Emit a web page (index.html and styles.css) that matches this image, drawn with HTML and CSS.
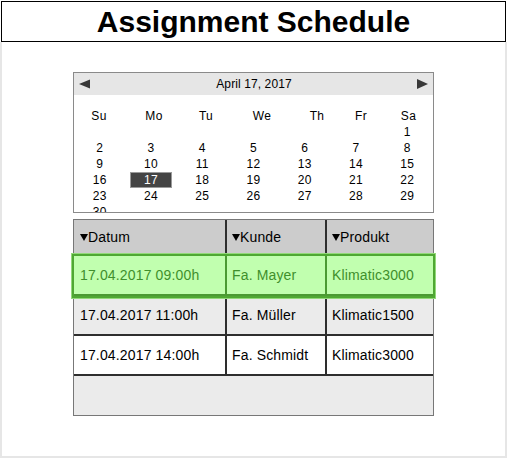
FILE: index.html
```html
<!DOCTYPE html>
<html>
<head>
<meta charset="utf-8">
<link rel="stylesheet" href="styles.css">
</head>
<body>
<div class="title">Assignment Schedule</div>
<div class="panel">
  <div class="calendar">
    <div class="cal-head">
      <svg class="arrow" width="12" height="11" viewBox="0 0 12 11"><polygon points="11,0.5 0,5 11,9.5" fill="#383838"/></svg>
      <span class="month">April 17, 2017</span>
      <svg class="arrow" width="12" height="11" viewBox="0 0 12 11"><polygon points="0,0 11,5 0,10" fill="#383838"/></svg>
    </div>
    <div class="dow">
      <span>Su</span><span>Mo</span><span>Tu</span><span>We</span><span>Th</span><span>Fr</span><span>Sa</span>
    </div>
    <div class="days">
      <span></span><span></span><span></span><span></span><span></span><span></span><span>1</span>
      <span>2</span><span>3</span><span>4</span><span>5</span><span>6</span><span>7</span><span>8</span>
      <span>9</span><span>10</span><span>11</span><span>12</span><span>13</span><span>14</span><span>15</span>
      <span>16</span><span class="sel">17</span><span>18</span><span>19</span><span>20</span><span>21</span><span>22</span>
      <span>23</span><span>24</span><span>25</span><span>26</span><span>27</span><span>28</span><span>29</span>
      <span>30</span>
    </div>
  </div>
  <div class="table">
    <div class="row head">
      <div class="cell"><i class="tri"></i>Datum</div>
      <div class="cell"><i class="tri"></i>Kunde</div>
      <div class="cell"><i class="tri"></i>Produkt</div>
    </div>
    <div class="row active">
      <div class="cell">17.04.2017 09:00h</div>
      <div class="cell">Fa. Mayer</div>
      <div class="cell">Klimatic3000</div>
    </div>
    <div class="row alt">
      <div class="cell">17.04.2017 11:00h</div>
      <div class="cell">Fa. Müller</div>
      <div class="cell">Klimatic1500</div>
    </div>
    <div class="row">
      <div class="cell">17.04.2017 14:00h</div>
      <div class="cell">Fa. Schmidt</div>
      <div class="cell">Klimatic3000</div>
    </div>
    <div class="row foot"></div>
  </div>
</div>
</body>
</html>
```
FILE: styles.css
```css
* { box-sizing: border-box; }
html, body { margin: 0; padding: 0; background: #fff; }
body {
  width: 507px;
  height: 458px;
  overflow: hidden;
  font-family: "Liberation Sans", Arial, sans-serif;
  color: #000;
}
.title {
  margin: 1px 1px 0 1px;
  width: 505px;
  height: 41px;
  border: 1px solid #000;
  padding-top: 1px;
  text-align: center;
  font-weight: bold;
  font-size: 30px;
  line-height: 38px;
}
.panel {
  width: 507px;
  height: 416px;
  border: 2px solid #e6e6e6;
  border-top: none;
  padding: 30px 0 0 71px;
}
.calendar {
  width: 361px;
  height: 141px;
  border: 1px solid #8a8a8a;
  overflow: hidden;
  font-size: 12px;
  line-height: 16px;
}
.cal-head {
  height: 22px;
  background: #e6e6e6;
  display: flex;
  align-items: center;
  justify-content: space-between;
  padding: 0 4px 0 5px;
}
.month { line-height: 22px; letter-spacing: 0.1px; }
.arrow { display: block; }
.dow {
  margin-top: 13px;
  display: grid;
  grid-template-columns: 50px 60px 44px 68px 42px 46px 49px;
  text-align: center;
  letter-spacing: 0.3px;
}
.days {
  display: grid;
  grid-template-columns: repeat(7, 1fr);
  text-align: center;
  letter-spacing: 0.3px;
}
.days span { height: 16px; }
.days .sel {
  margin: 0 5px;
  background: #444;
  border: 1px solid #9a9a9a;
  color: #fff;
  line-height: 14px;
}
.table {
  margin-top: 6px;
  width: 361px;
  border: 1px solid #777;
  font-size: 14px;
  letter-spacing: 0.15px;
}
.row {
  display: grid;
  grid-template-columns: 153px 100px 106px;
  height: 40px;
  border-bottom: 2px solid #2e2e2e;
}
.cell {
  border-right: 2px solid #2e2e2e;
  padding-left: 5px;
  display: flex;
  align-items: center;
}
.cell:first-child { padding-left: 6px; }
.cell:last-child { border-right: none; }
.head { height: 36px; background: #cccccc; }
.tri {
  display: inline-block;
  width: 0;
  height: 0;
  border-left: 4px solid transparent;
  border-right: 4px solid transparent;
  border-top: 7px solid #000;
  margin-right: 0;
  margin-top: 1px;
}
.active {
  background: #c1ffaf;
  color: #3f8f2c;
  border-bottom-color: #4b9a33;
  outline: 2px solid #4fa833;
  box-shadow: 0 0 0 3px #93d97a;
  position: relative;
}
.active .cell { border-right-color: #4b9a33; }
.active .cell:last-child { border-right: none; }
.alt { background: #ebebeb; }
.foot { height: 39px; background: #ebebeb; border-bottom: none; }
```
